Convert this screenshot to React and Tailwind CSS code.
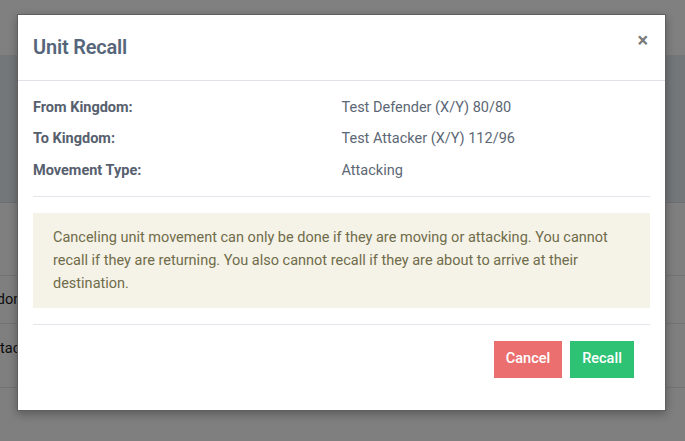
import React from 'react';

const rows = [
    { label: 'From Kingdom:', value: 'Test Defender (X/Y) 80/80' },
    { label: 'To Kingdom:', value: 'Test Attacker (X/Y) 112/96' },
    { label: 'Movement Type:', value: 'Attacking' },
];

const App = () => {
    return (
        <div className="relative w-[685px] h-[441px] overflow-hidden bg-[#7f7f7f] font-['Roboto',sans-serif]">

            {/* Page behind the overlay */}
            <div className="flex flex-col">
                <div className="h-[55px] bg-[#808080]" />
                <div className="h-[148px] bg-[#74777a] border-b border-[#6f6f6f]" />
                <div className="h-[73px] border-b border-[#737373]" />
                <div className="h-[48px] flex items-center border-b border-[#737373] text-[14.5px] text-[#0d0d0d] -ml-[32px]">Kingdom</div>
                <div className="h-[64px] flex items-start pt-[14px] border-b border-[#737373] text-[14.5px] text-[#0d0d0d] -ml-[14px]">Attacker</div>
            </div>

            {/* Modal */}
            <div className="absolute left-[17px] top-[14px] w-[649px] h-[397px] bg-white border border-[#5f5f5f] shadow-[0_3px_9px_rgba(0,0,0,0.3)] flex flex-col">

                {/* Header */}
                <div className="h-[66px] flex items-center justify-between pl-[15px] pr-[17px] border-b border-[#dfe3e8]">
                    <h4 className="text-[20px] font-semibold text-[#56667a] tracking-[-0.2px] -mt-[1px]">Unit Recall</h4>
                    <button className="text-[20px] font-bold leading-none text-[#7a7a7a] -mt-[16px]">×</button>
                </div>

                {/* Body */}
                <div className="px-[15px] pt-[11px]">
                    {rows.map((row) => (
                        <div key={row.label} className="grid grid-cols-2 h-[31.5px] items-center text-[14.5px]">
                            <span className="font-bold text-[#56606e]">{row.label}</span>
                            <span className="text-[#5c6775]">{row.value}</span>
                        </div>
                    ))}

                    <hr className="mt-[9px] border-[#e3e6ea]" />

                    <div className="mt-[16px] bg-[#f5f2e7] px-[20px] py-[13px] text-[14.5px] leading-[23px] text-[#6f6c4a]">
                        Canceling unit movement can only be done if they are moving or attacking. You cannot recall if they are returning. You also cannot recall if they are about to arrive at their destination.
                    </div>

                    <hr className="mt-[16px] border-[#e3e6ea]" />

                    {/* Footer */}
                    <div className="flex justify-end gap-[8px] pt-[16px] pr-[16px]">
                        <button className="h-[37px] w-[68px] bg-[#ec6f70] text-white text-[14.5px] font-medium">Cancel</button>
                        <button className="h-[37px] w-[64px] bg-[#2ec275] text-white text-[14.5px] font-medium">Recall</button>
                    </div>
                </div>
            </div>
        </div>
    );
};

export default App;
